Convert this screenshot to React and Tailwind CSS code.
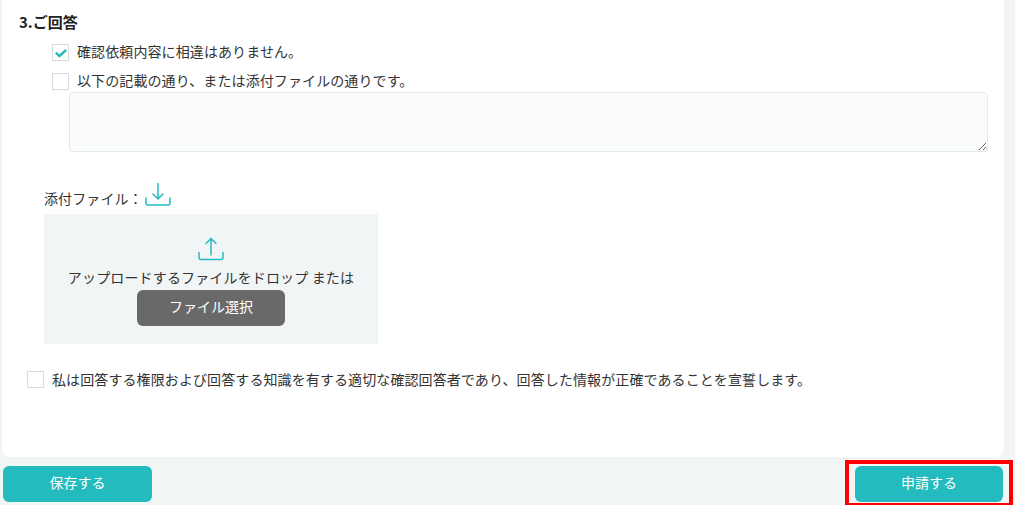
const fontStack = { fontFamily: '"Noto Sans CJK JP", sans-serif' };

const CheckBox = ({ checked }) => (
  <span className="flex h-[17px] w-[17px] shrink-0 items-center justify-center border border-[#d9dcdc] bg-white">
    {checked && (
      <svg width="12" height="10" viewBox="0 0 12 10" fill="none">
        <path d="M.8 4.6 4.3 8 11.2 1.8" stroke="#23bbbe" strokeWidth="2.4" />
      </svg>
    )}
  </span>
);

const TrayIcon = ({ up }) => (
  <svg width="26" height="24" viewBox="0 0 26 24" fill="none" stroke="#23bbbe" strokeWidth="1.5" strokeLinecap="round">
    <path d={up ? "M1 15.5v5A2 2 0 0 0 3 22.5h20a2 2 0 0 0 2-2v-5" : "M1 15v5A2 2 0 0 0 3 22h20a2 2 0 0 0 2-2v-5"} />
    {up ? <path d="M13 18V1.5M8 6.5l5-5 5 5" /> : <path d="M13 .5V16M8 11l5 5 5-5" />}
  </svg>
);

const App = () => {
  return (
    <div className="relative h-[505px] w-[1015px] bg-[#f1f5f6] text-[#333]" style={fontStack}>
      <div className="ml-[2px] h-[457px] w-[1002px] rounded-b-lg bg-white">
        <h3 className="pl-[17px] pt-[12px] text-[15px] font-bold leading-[20px] text-[#222]">3.ご回答</h3>

        <div className="pl-[50px] pt-[12px]">
          <label className="flex h-[17px] items-center gap-2 text-[14px] tracking-[0.1px]">
            <CheckBox checked />
            <span className="-mt-[2px]">確認依頼内容に相違はありません。</span>
          </label>
          <label className="mt-[12px] flex h-[17px] items-center gap-2 text-[14px] tracking-[0.1px]">
            <CheckBox />
            <span className="-mt-[2px]">以下の記載の通り、または添付ファイルの通りです。</span>
          </label>
          <textarea
            readOnly
            className="ml-[17px] mt-[2px] block h-[60px] w-[919px] rounded border border-[#e6e9ea] bg-[#fafbfc]"
          />
        </div>

        <div className="pl-[42px] pt-[31px]">
          <div className="flex h-[24px] items-start text-[14px] tracking-[0.1px]">
            <span className="mt-[5px]">添付ファイル：</span>
            <span className="ml-[2px]"><TrayIcon /></span>
          </div>
          <div className="mt-[7px] flex h-[130px] w-[334px] flex-col items-center bg-[#f1f5f6] pt-[23px]">
            <TrayIcon up />
            <p className="mt-[6px] text-[14px] leading-[20px] tracking-[0.15px]">アップロードするファイルをドロップ または</p>
            <button className="mt-[3px] h-[36px] w-[148px] rounded-md bg-[#696969] pb-[3px] text-[14px] text-white">ファイル選択</button>
          </div>
        </div>

        <label className="ml-[25px] mt-[27px] flex h-[17px] items-center gap-2 text-[14px] tracking-[0.1px]">
          <CheckBox />
          <span className="-mt-[1px]">私は回答する権限および回答する知識を有する適切な確認回答者であり、回答した情報が正確であることを宣誓します。</span>
        </label>
      </div>

      <div className="flex justify-between pl-[3px] pr-[12px] pt-[9px]">
        <button className="h-[36px] w-[149px] rounded-md bg-[#23bbbe] pb-[3px] text-[14px] text-white">保存する</button>
        <button className="h-[36px] w-[148px] rounded-md bg-[#23bbbe] pb-[3px] text-[14px] text-white">申請する</button>
      </div>

      {/* red annotation box round the submit button */}
      <div className="pointer-events-none absolute left-[845px] top-[460px] h-[47px] w-[168px] border-4 border-[#ff0000]" />
    </div>
  );
};

export default App;
